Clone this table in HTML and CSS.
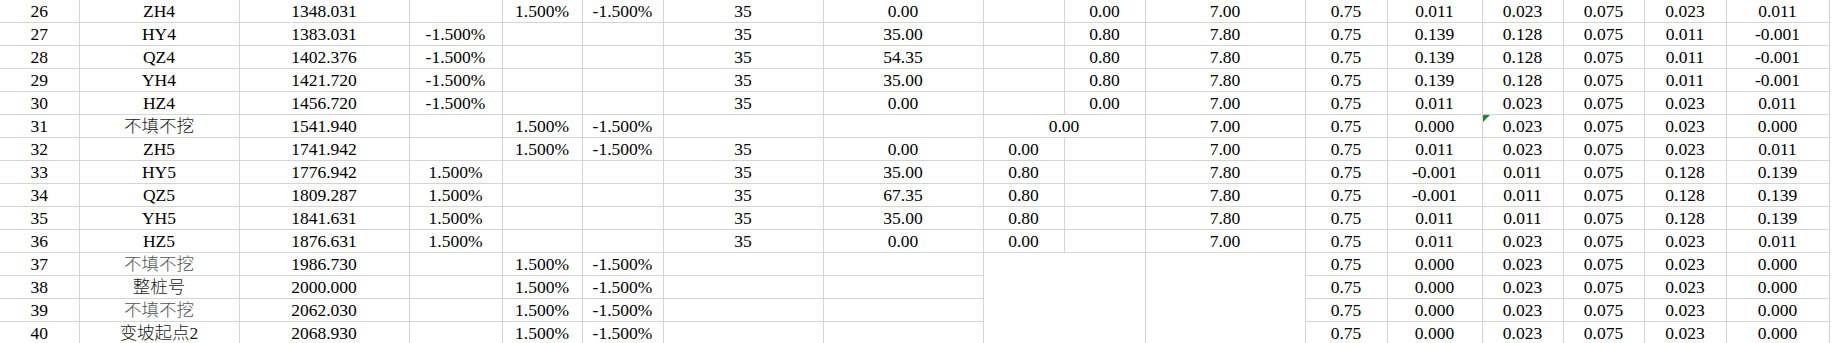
FILE: index.html
```html
<!DOCTYPE html>
<html lang="zh">
<head>
<meta charset="utf-8">
<title>Sheet</title>
<link rel="stylesheet" href="styles.css">
</head>
<body>
<table class="sheet">
  <colgroup>
    <col class="c-a"><col class="c-b"><col class="c-c"><col class="c-d"><col class="c-e"><col class="c-f">
    <col class="c-g"><col class="c-h"><col class="c-i"><col class="c-j"><col class="c-k"><col class="c-l">
    <col class="c-m"><col class="c-n"><col class="c-o"><col class="c-p"><col class="c-q">
  </colgroup>
  <tbody>
    <tr class="first">
      <td>26</td><td>ZH4</td><td>1348.031</td><td></td><td>1.500%</td><td>-1.500%</td><td>35</td><td>0.00</td><td></td><td>0.00</td><td>7.00</td><td>0.75</td><td>0.011</td><td>0.023</td><td>0.075</td><td>0.023</td><td>0.011</td>
    </tr>
    <tr>
      <td>27</td><td>HY4</td><td>1383.031</td><td>-1.500%</td><td></td><td></td><td>35</td><td>35.00</td><td></td><td>0.80</td><td>7.80</td><td>0.75</td><td>0.139</td><td>0.128</td><td>0.075</td><td>0.011</td><td>-0.001</td>
    </tr>
    <tr>
      <td>28</td><td>QZ4</td><td>1402.376</td><td>-1.500%</td><td></td><td></td><td>35</td><td>54.35</td><td></td><td>0.80</td><td>7.80</td><td>0.75</td><td>0.139</td><td>0.128</td><td>0.075</td><td>0.011</td><td>-0.001</td>
    </tr>
    <tr>
      <td>29</td><td>YH4</td><td>1421.720</td><td>-1.500%</td><td></td><td></td><td>35</td><td>35.00</td><td></td><td>0.80</td><td>7.80</td><td>0.75</td><td>0.139</td><td>0.128</td><td>0.075</td><td>0.011</td><td>-0.001</td>
    </tr>
    <tr>
      <td>30</td><td>HZ4</td><td>1456.720</td><td>-1.500%</td><td></td><td></td><td>35</td><td>0.00</td><td></td><td>0.00</td><td>7.00</td><td>0.75</td><td>0.011</td><td>0.023</td><td>0.075</td><td>0.023</td><td>0.011</td>
    </tr>
    <tr>
      <td>31</td><td class="cjk">不填不挖</td><td>1541.940</td><td></td><td>1.500%</td><td>-1.500%</td><td></td><td></td><td colspan="2">0.00</td><td>7.00</td><td>0.75</td><td>0.000</td><td class="flag"><span class="err"></span>0.023</td><td>0.075</td><td>0.023</td><td>0.000</td>
    </tr>
    <tr>
      <td>32</td><td>ZH5</td><td>1741.942</td><td></td><td>1.500%</td><td>-1.500%</td><td>35</td><td>0.00</td><td>0.00</td><td></td><td>7.00</td><td>0.75</td><td>0.011</td><td>0.023</td><td>0.075</td><td>0.023</td><td>0.011</td>
    </tr>
    <tr>
      <td>33</td><td>HY5</td><td>1776.942</td><td>1.500%</td><td></td><td></td><td>35</td><td>35.00</td><td>0.80</td><td></td><td>7.80</td><td>0.75</td><td>-0.001</td><td>0.011</td><td>0.075</td><td>0.128</td><td>0.139</td>
    </tr>
    <tr>
      <td>34</td><td>QZ5</td><td>1809.287</td><td>1.500%</td><td></td><td></td><td>35</td><td>67.35</td><td>0.80</td><td></td><td>7.80</td><td>0.75</td><td>-0.001</td><td>0.011</td><td>0.075</td><td>0.128</td><td>0.139</td>
    </tr>
    <tr>
      <td>35</td><td>YH5</td><td>1841.631</td><td>1.500%</td><td></td><td></td><td>35</td><td>35.00</td><td>0.80</td><td></td><td>7.80</td><td>0.75</td><td>0.011</td><td>0.011</td><td>0.075</td><td>0.128</td><td>0.139</td>
    </tr>
    <tr>
      <td>36</td><td>HZ5</td><td>1876.631</td><td>1.500%</td><td></td><td></td><td>35</td><td>0.00</td><td>0.00</td><td></td><td>7.00</td><td>0.75</td><td>0.011</td><td>0.023</td><td>0.075</td><td>0.023</td><td>0.011</td>
    </tr>
    <tr>
      <td>37</td><td class="cjk muted">不填不挖</td><td>1986.730</td><td></td><td>1.500%</td><td>-1.500%</td><td></td><td></td><td colspan="2" rowspan="4"></td><td rowspan="4"></td><td>0.75</td><td>0.000</td><td>0.023</td><td>0.075</td><td>0.023</td><td>0.000</td>
    </tr>
    <tr>
      <td>38</td><td class="cjk">整桩号</td><td>2000.000</td><td></td><td>1.500%</td><td>-1.500%</td><td></td><td></td><td>0.75</td><td>0.000</td><td>0.023</td><td>0.075</td><td>0.023</td><td>0.000</td>
    </tr>
    <tr>
      <td>39</td><td class="cjk muted">不填不挖</td><td>2062.030</td><td></td><td>1.500%</td><td>-1.500%</td><td></td><td></td><td>0.75</td><td>0.000</td><td>0.023</td><td>0.075</td><td>0.023</td><td>0.000</td>
    </tr>
    <tr>
      <td>40</td><td class="cjk">变坡起点2</td><td>2068.930</td><td></td><td>1.500%</td><td>-1.500%</td><td></td><td></td><td>0.75</td><td>0.000</td><td>0.023</td><td>0.075</td><td>0.023</td><td>0.000</td>
    </tr>
  </tbody>
</table>
</body>
</html>
```
FILE: styles.css
```css
html, body {
  margin: 0;
  padding: 0;
  background: #ffffff;
}

body {
  width: 1835px;
  height: 343px;
  overflow: hidden;
}

.sheet {
  border-collapse: collapse;
  table-layout: fixed;
  width: 1829px;
  font-family: "Liberation Serif", "Noto Sans CJK SC", serif;
  font-size: 17.5px;
  color: #000;
}

.c-a { width: 79px; }
.c-b { width: 160px; }
.c-c { width: 170px; }
.c-d { width: 93px; }
.c-e { width: 80px; }
.c-f { width: 81px; }
.c-g { width: 160px; }
.c-h { width: 160px; }
.c-i { width: 81px; }
.c-j { width: 81px; }
.c-k { width: 160px; }
.c-l { width: 82px; }
.c-m { width: 95px; }
.c-n { width: 81px; }
.c-o { width: 81px; }
.c-p { width: 82px; }
.c-q { width: 103px; }

.sheet tr {
  height: 22.87px;
}

.sheet td {
  border: 1px solid #d4d4d4;
  padding: 1px 0 0 0;
  height: 21.87px;
  box-sizing: border-box;
  line-height: 21px;
  text-align: center;
  vertical-align: top;
  white-space: nowrap;
  overflow: hidden;
}

.sheet tr:first-child td {
  border-top: none;
}

.sheet td:first-child {
  border-left: none;
}

.cjk {
  font-weight: 300;
  color: #1a1a1a;
}

.cjk.muted {
  color: #555555;
}

.flag {
  position: relative;
}

.err {
  position: absolute;
  left: 0;
  top: 0;
  width: 0;
  height: 0;
  border-top: 7px solid #1f8a2a;
  border-right: 7px solid transparent;
}
```
